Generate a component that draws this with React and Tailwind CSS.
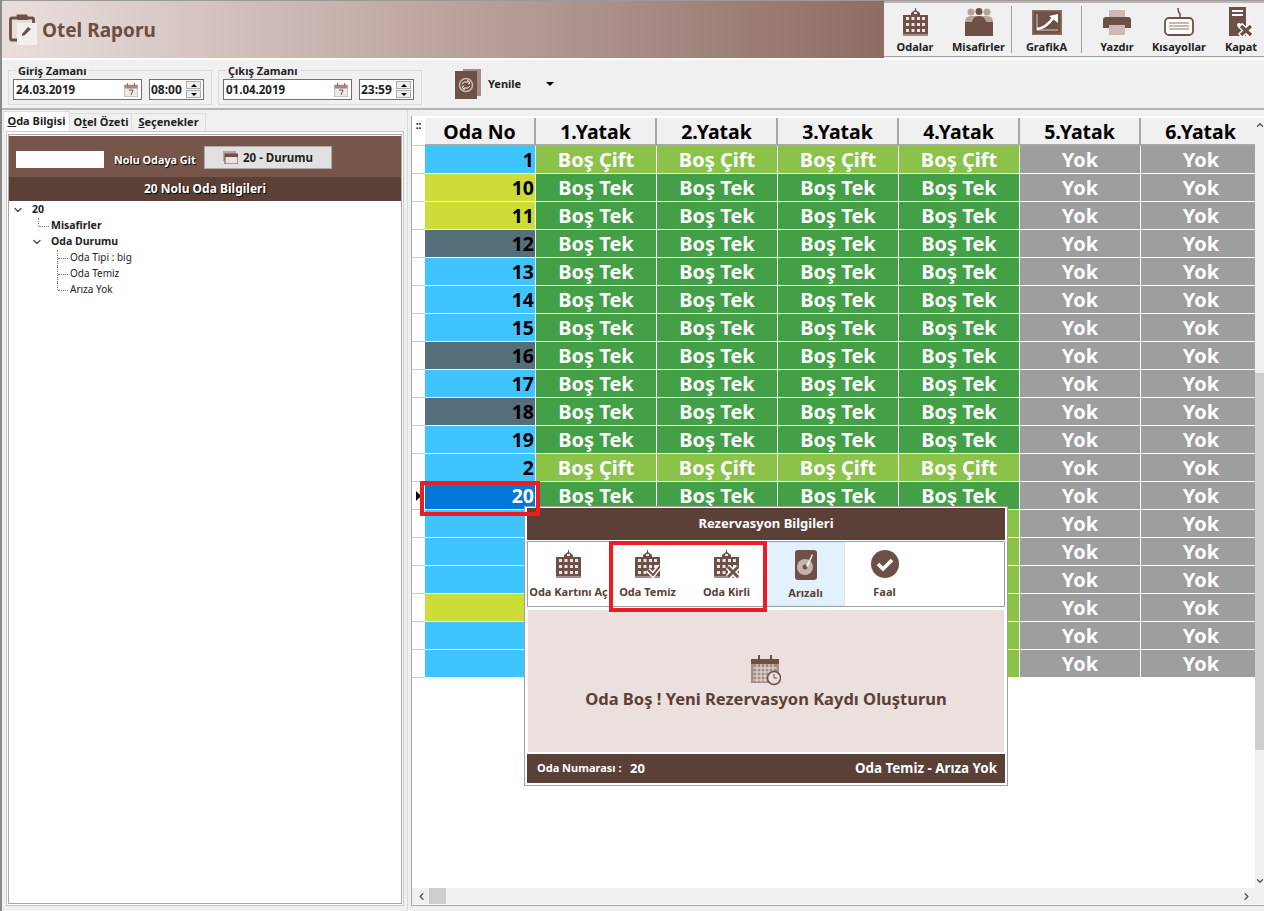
import React from "react";
import { ChevronDown, ChevronUp, ChevronLeft, ChevronRight } from "lucide-react";

const brown = "#6f5046";

// kind: c = boş çift, t = boş tek, h = behind the popup
const rooms = [
  ["1", "bg-[#40c4ff]", "c"],
  ["10", "bg-[#cddc39]", "t"],
  ["11", "bg-[#cddc39]", "t"],
  ["12", "bg-[#546e7a]", "t"],
  ["13", "bg-[#40c4ff]", "t"],
  ["14", "bg-[#40c4ff]", "t"],
  ["15", "bg-[#40c4ff]", "t"],
  ["16", "bg-[#546e7a]", "t"],
  ["17", "bg-[#40c4ff]", "t"],
  ["18", "bg-[#546e7a]", "t"],
  ["19", "bg-[#40c4ff]", "t"],
  ["2", "bg-[#40c4ff]", "c"],
  ["20", "bg-[#0078d7]", "t"],
  ["3", "bg-[#40c4ff]", "h"],
  ["4", "bg-[#40c4ff]", "h"],
  ["5", "bg-[#40c4ff]", "h"],
  ["6", "bg-[#cddc39]", "h"],
  ["7", "bg-[#40c4ff]", "h"],
  ["8", "bg-[#40c4ff]", "h"],
];

function BuildingIcon({ children }) {
  return (
    <svg width="25" height="28" viewBox="0 0 25 28">
      <path d="M12 0l1 0 0 2 4 3 0 2 8 0 0 21-25 0 0-21 8 0 0-2 4-3z" fill={brown} />
      <rect x="0" y="26" width="25" height="2" fill="#a58d85" />
      <g fill="#fff" opacity="0.85">
        <rect x="11" y="4" width="3" height="2" />
        {[9, 15, 21].map((y) => (
          <React.Fragment key={y}>
            <rect x="3" y={y} width="3" height="3" />
            <rect x="8.5" y={y} width="3" height="3" />
            <rect x="14" y={y} width="3" height="3" />
            <rect x="19" y={y} width="3" height="3" />
          </React.Fragment>
        ))}
      </g>
      {children}
    </svg>
  );
}

function PeopleIcon() {
  return (
    <svg width="28" height="28" viewBox="0 0 28 28">
      <circle cx="6" cy="4" r="3.5" fill="#b8a29a" />
      <circle cx="22" cy="4" r="3.5" fill="#b8a29a" />
      <circle cx="14" cy="3.5" r="3.5" fill={brown} />
      <path d="M0 14q0-6 6-6l16 0q6 0 6 6l0 14-28 0z" fill="#b8a29a" />
      <path d="M0 14l7 0q1-6 7-6 6 0 7 6l7 0 0 14-28 0z" fill={brown} />
    </svg>
  );
}

function ChartIcon() {
  return (
    <svg width="30" height="25" viewBox="0 0 30 25">
      <rect x="0" y="0" width="30" height="25" fill="#8d6e63" />
      <rect x="1.5" y="1.5" width="27" height="22" fill={brown} />
      <path d="M5 4l0 16 21 0" stroke="#d9cdc9" strokeWidth="1" fill="none" />
      <path d="M5 19q9-1 16-11" stroke="#fff" strokeWidth="2.5" fill="none" />
      <path d="M17 6l9-2 0 9z" fill="#fff" />
    </svg>
  );
}

function PrinterIcon() {
  return (
    <svg width="28" height="25" viewBox="0 0 28 25">
      <rect x="6" y="0" width="16" height="8" fill="#ccb9b3" />
      <path d="M3 7l22 0q3 0 3 3l0 8-6 0 0-3-16 0 0 3-6 0 0-8q0-3 3-3z" fill={brown} />
      <rect x="6" y="15" width="16" height="10" fill="#ccb9b3" />
    </svg>
  );
}

function KeyboardIcon() {
  return (
    <svg width="30" height="28" viewBox="0 0 30 28">
      <path d="M14 0q0 4 2 6l0 6" stroke={brown} strokeWidth="1.6" fill="none" />
      <rect x="1" y="10" width="28" height="17" rx="4" fill="#fff" stroke={brown} strokeWidth="1.8" />
      <g fill="#c9b8b2">
        {[14, 17, 20].map((y) => (
          <rect key={y} x="5" y={y} width="20" height="2" />
        ))}
      </g>
    </svg>
  );
}

function ServerXIcon() {
  return (
    <svg width="24" height="30" viewBox="0 0 24 30">
      <rect x="0" y="0" width="17" height="29" fill={brown} />
      <rect x="3" y="3" width="11" height="2" fill="#fff" />
      <rect x="3" y="7" width="11" height="2" fill="#fff" />
      <circle cx="10" cy="18" r="2" fill="#fff" />
      <path d="M11 18l12 11M23 18l-12 11" stroke="#fff" strokeWidth="6" />
      <path d="M12 19l10 9M22 19l-10 9" stroke={brown} strokeWidth="3.5" />
    </svg>
  );
}

function ClipboardIcon() {
  return (
    <svg width="29" height="32" viewBox="0 0 29 32">
      <path d="M3 4l6 0 0-2 8 0 0 2 6 0q1.500 0 1.500 1.500l0 19q0 1.500-1.500 1.500l-20 0q-1.500 0-1.500-1.500l0-19q0-1.500 1.500-1.500z" fill="none" stroke={brown} strokeWidth="2.8" />
      <rect x="8" y="2" width="11" height="4" fill={brown} />
      <rect x="8" y="9" width="20" height="22" fill="#f3efed" />
      <path d="M13 20l6-7 3 2-6 6-3 1z" fill={brown} />
    </svg>
  );
}

function CalendarMini() {
  return (
    <svg width="14" height="14" viewBox="0 0 14 14">
      <rect x="0.5" y="2" width="13" height="11.5" fill="#ece8e6" stroke="#c9c2bf" />
      <rect x="0.5" y="2" width="13" height="3.5" fill="#a78a80" />
      <rect x="3" y="0" width="1" height="3" fill="#8d6e63" />
      <rect x="10" y="0" width="1" height="3" fill="#8d6e63" />
      <path d="M5 7l4 0-2 5" stroke="#6f5046" fill="none" />
    </svg>
  );
}

function Spinner() {
  return (
    <div className="w-[15px] h-[17px] flex flex-col gap-px">
      <div className="flex-1 bg-[#ededed] border border-[#adadad] flex items-center justify-center">
        <div className="w-0 h-0 border-x-[3px] border-x-transparent border-b-[3px] border-b-black" />
      </div>
      <div className="flex-1 bg-[#ededed] border border-[#adadad] flex items-center justify-center">
        <div className="w-0 h-0 border-x-[3px] border-x-transparent border-t-[3px] border-t-black" />
      </div>
    </div>
  );
}

function DateGroup({ label, date, time }) {
  return (
    <fieldset className="w-[204px] h-[41px] border border-[#dcdcdc] px-[4px] flex">
      <legend className="ml-[3px] px-[2px] text-[11px] leading-[13px] font-bold text-[#222]">{label}</legend>
      <div className="flex items-start gap-[7px] mt-[2px]">
        <div className="w-[129px] h-[21px] bg-white border border-[#707070] flex items-center justify-between pl-[2px] pr-[3px] text-[11.5px] font-bold text-[#222]">
          {date}
          <CalendarMini />
        </div>
        <div className="w-[55px] h-[21px] bg-white border border-[#707070] flex items-center justify-between pl-[1px] pr-[2px] text-[12px] font-bold text-[#222]">
          {time}
          <Spinner />
        </div>
      </div>
    </fieldset>
  );
}

function ToolButton({ icon, label, className }) {
  return (
    <div className={"shrink-0 flex flex-col items-center h-[48px] " + className}>
      <div className="h-[32px] flex items-center justify-center">{icon}</div>
      <span className="mt-[2px] text-[11px] leading-[13px] font-bold text-[#222] whitespace-nowrap">{label}</span>
    </div>
  );
}

function TreeRow({ indent, open, bold, line, last, children }) {
  return (
    <div className="h-[16px] flex items-center text-[#222] relative" style={{ paddingLeft: indent }}>
      {open && <ChevronDown size={12} strokeWidth={3} className="text-[#555] -ml-[20px] mr-[8px] shrink-0" />}
      {line && (
        <span className={"absolute top-0 border-l border-dotted border-[#777] " + (last ? "h-[8px]" : "h-[16px]")} style={{ left: indent - 13 }} />
      )}
      {line && <span className="w-[10px] mr-[2px] -ml-[12px] border-t border-dotted border-[#777]" />}
      <span className={bold ? "font-bold text-[10.5px]" : "text-[10px] -mt-[2px]"}>{children}</span>
    </div>
  );
}

function Cell({ kind, col }) {
  const base = "text-white text-center border-r border-b border-white leading-[27px] ";
  if (col >= 5) return <div className={base + "bg-[#9e9e9e]"}>Yok</div>;
  if (kind === "h") return <div className={base + "bg-[#8bc34a]"} />;
  return <div className={base + (kind === "c" ? "bg-[#8bc34a]" : "bg-[#43a047]")}>{kind === "c" ? "Boş Çift" : "Boş Tek"}</div>;
}

function PopButton({ icon, label, active }) {
  return (
    <div className={"w-[79px] h-[64px] flex flex-col items-center pt-[7px] " + (active ? "bg-[#e3f1fc] border border-[#d3e8fa]" : "")}>
      <div className="h-[30px] flex items-center">{icon}</div>
      <span className="mt-[6px] text-[11px] leading-[13px] font-bold text-[#5b4037] whitespace-nowrap">{label}</span>
    </div>
  );
}

function Popup() {
  return (
    <div className="absolute left-[524px] top-[506px] w-[484px] h-[280px] bg-white border border-[#a0a0a0] p-[1px] flex flex-col">
      <div className="h-[32px] mx-[1px] bg-[#5b4037] flex items-center justify-center text-white text-[13px] font-bold">Rezervasyon Bilgileri</div>
      <div className="h-[66px] mt-[1px] mx-[1px] border border-[#a0a0a0] flex pl-[1px]">
        <PopButton label="Oda Kartını Aç" icon={<BuildingIcon />} />
        <PopButton label="Oda Temiz" icon={
          <BuildingIcon>
            <path d="M13 20l5 5 7-9" stroke="#fff" strokeWidth="5" fill="none" />
            <path d="M13 20l5 5 7-9" stroke={brown} strokeWidth="2" fill="none" />
          </BuildingIcon>} />
        <PopButton label="Oda Kirli" icon={
          <BuildingIcon>
            <path d="M14 17l10 10M24 17l-10 10" stroke="#fff" strokeWidth="6" />
            <path d="M14 17l10 10M24 17l-10 10" stroke={brown} strokeWidth="3" />
          </BuildingIcon>} />
        <PopButton active label="Arızalı" icon={
          <svg width="22" height="30" viewBox="0 0 22 30">
            <rect x="0" y="0" width="22" height="30" rx="3" fill={brown} />
            <circle cx="10" cy="17" r="8" fill="#c5b3ad" />
            <circle cx="10" cy="17" r="2.5" fill={brown} />
            <path d="M11 16l6-12 1 1-5 12z" fill="#f0ebe9" />
          </svg>} />
        <PopButton label="Faal" icon={
          <svg width="28" height="28" viewBox="0 0 28 28">
            <circle cx="14" cy="14" r="14" fill={brown} />
            <path d="M7 14l5 5 9-9" stroke="#fff" strokeWidth="3.5" fill="none" />
          </svg>} />
      </div>
      <div className="h-[142px] mt-[3px] mx-[2px] bg-[#ece0de] flex flex-col items-center pt-[44px]">
        <svg width="30" height="32" viewBox="0 0 30 32">
          <rect x="0" y="5" width="28" height="24" fill="#a58d85" />
          <rect x="0" y="5" width="28" height="5" fill={brown} />
          <rect x="7" y="1" width="2" height="7" fill={brown} />
          <rect x="19" y="1" width="2" height="7" fill={brown} />
          <path d="M2 14h24M2 18h24M2 22h24M2 26h24M6 10v18M10 10v18M14 10v18M18 10v18M22 10v18" stroke="#ece0de" />
          <circle cx="23" cy="24" r="6.5" fill="#ece0de" stroke={brown} strokeWidth="1.5" />
          <path d="M23 20v4h3" stroke={brown} fill="none" />
        </svg>
        <div className="text-[16.500px] leading-[20px] mt-[3px] font-bold text-[#5b4037]">Oda Boş ! Yeni Rezervasyon Kaydı Oluşturun</div>
      </div>
      <div className="h-[29px] mt-[2px] mx-[1px] bg-[#5b4037] flex items-center text-white font-bold pl-[10px] pr-[8px]">
        <span className="text-[11px] w-[93px]">Oda Numarası :</span>
        <span className="text-[13px]">20</span>
        <span className="ml-auto text-[13.400px]">Oda Temiz - Arıza Yok</span>
      </div>
    </div>
  );
}

export default function App() {
  return (
    <div className="relative w-[1264px] h-[911px] overflow-hidden bg-[#f0f0f0] border-l-2 border-l-[#8a8a8a] font-['Noto_Sans',sans-serif] flex flex-col">
      {/* title bar */}
      <div className="h-[58px] flex border-t border-t-[#9a9a9a] shrink-0">
        <div className="w-[882px] border-r-2 border-r-[#8f6d65] bg-linear-to-r from-[#eadfdd] to-[#8f6d65] flex items-center pl-[7px] gap-[4px]">
          <ClipboardIcon />
          <span className="mt-[1px] text-[19px] font-bold text-[#6b4d43]">Otel Raporu</span>
        </div>
        <div className="flex-1 border-t-2 border-t-[#bfb5b2] border-b border-b-[#a0a0a0] mb-[1px] flex pt-[3px] overflow-hidden">
          <ToolButton className="w-[62px]" label="Odalar" icon={<BuildingIcon />} />
          <ToolButton className="w-[65px]" label="Misafirler" icon={<PeopleIcon />} />
          <div className="w-px h-[47px] bg-[#a0a0a0] shrink-0" />
          <ToolButton className="w-[69px]" label="GrafikA" icon={<ChartIcon />} />
          <div className="w-px h-[47px] bg-[#a0a0a0] shrink-0" />
          <div className="w-[4px] shrink-0" />
          <ToolButton className="w-[62px]" label="Yazdır" icon={<PrinterIcon />} />
          <ToolButton className="w-[62px]" label="Kısayollar" icon={<KeyboardIcon />} />
          <ToolButton className="w-[62px]" label="Kapat" icon={<ServerXIcon />} />
        </div>
      </div>
      <div className="h-[2px] bg-white shrink-0" />

      {/* date bar */}
      <div className="h-[50px] shrink-0 border-b-2 border-b-[#b4b4b4] flex items-start pl-[6px] pt-[4px] gap-[6px]">
        <DateGroup label="Giriş Zamanı" date="24.03.2019" time="08:00" />
        <DateGroup label="Çıkış Zamanı" date="01.04.2019" time="23:59" />
        <div className="ml-[27px] mt-[5px] flex items-center">
          <svg width="26" height="30" viewBox="0 0 26 30">
            <rect x="8" y="0" width="18" height="27" fill="#a58d85" />
            <rect x="0" y="2" width="22" height="28" fill={brown} />
            <circle cx="11" cy="16" r="6.500" fill="none" stroke="#c9b8b2" strokeWidth="1.500" />
            <path d="M7 15q2-3 6-2l0-1.500 2 2.500-2 1M15 17q-2 3-6 2l0 1.500-2-2.500 2-1" stroke="#fff" strokeWidth="1" fill="none" />
          </svg>
          <span className="ml-[7px] w-[58px] text-[11px] font-bold text-[#222]">Yenile</span>
          <div className="w-0 h-0 border-x-[4px] border-x-transparent border-t-[4px] border-t-black" />
        </div>
      </div>

      <div className="flex-1 flex min-h-0">
        {/* left panel */}
        <div className="w-[403px] shrink-0 pl-[1px] pt-[1px] pb-[5px] flex flex-col">
          <div className="flex h-[20px] items-end text-[11px] font-bold text-[#222]">
            <div className="h-[20px] w-[67px] bg-white flex items-start pt-[1px] justify-center border-x border-t border-[#dcdcdc]"><span><u>O</u>da Bilgisi</span></div>
            <div className="h-[18px] w-[61px] ml-px flex items-center justify-center border-r border-t border-[#dcdcdc]"><span>O<u>t</u>el Özeti</span></div>
            <div className="h-[18px] w-[74px] flex items-center justify-center border-r border-t border-[#dcdcdc]"><span><u>S</u>eçenekler</span></div>
          </div>
          <div className="ml-[3px] mr-[1px] flex-1 bg-white border border-[#c8c8c8] p-[1px] pt-[2px]">
            <div className="h-full border border-[#a8a8a8] pt-[1px]">
              <div className="h-[41px] bg-[#77554a] flex items-center pl-[7px] text-white font-bold">
                <div className="w-[88px] h-[17px] bg-white mt-[6px]" />
                <span className="ml-[10px] mt-[7px] w-[90px] text-[10.800px] [text-shadow:1px_1px_1px_#000]">Nolu Odaya Git</span>
                <div className="w-[128px] h-[23px] mt-[2px] bg-[#e1e1e1] border border-[#ababab] flex items-center justify-center gap-[5px] text-[#222] text-[11.500px]">
                  <svg width="15" height="13" viewBox="0 0 15 13">
                    <rect x="0" y="0" width="13" height="10" fill="#b8a29a" />
                    <rect x="2" y="3" width="13" height="10" fill="#e9e2df" stroke={brown} />
                    <rect x="2" y="3" width="13" height="3" fill={brown} />
                  </svg>
                  20 - Durumu
                </div>
              </div>
              <div className="h-[24px] bg-[#5b4037] flex items-center justify-center text-white text-[12px] font-bold [text-shadow:1px_1px_1px_#000]">20 Nolu Oda Bilgileri</div>
              <div className="pt-[1px]">
                <TreeRow indent={23} open bold>20</TreeRow>
                <TreeRow indent={42} bold line last>Misafirler</TreeRow>
                <TreeRow indent={42} open bold>Oda Durumu</TreeRow>
                <TreeRow indent={61} line>Oda Tipi : big</TreeRow>
                <TreeRow indent={61} line>Oda Temiz</TreeRow>
                <TreeRow indent={61} line last>Arıza Yok</TreeRow>
              </div>
            </div>
          </div>
        </div>

        {/* grid panel */}
        <div className="flex-1 min-w-0 border-l border-l-[#dcdcdc] ml-[2px] pb-[5px] pt-[6px] flex flex-col">
          <div className="flex-1 ml-[3px] border-l border-l-[#a8a8a8] border-b border-b-[#a8a8a8] flex flex-col bg-white min-h-0 pt-[2px]">
            <div className="flex-1 flex min-h-0">
              <div className="flex-1 min-w-0 overflow-hidden">
                <div className="grid grid-cols-[13px_111px_121px_121px_121px_121px_121px_121px] grid-rows-[28px] auto-rows-[28px] text-[20px] font-bold w-max">
                  <div className="text-[10px] leading-[14px] text-black text-center border-b border-[#ccc]">::</div>
                  {["Oda No", "1.Yatak", "2.Yatak", "3.Yatak", "4.Yatak", "5.Yatak", "6.Yatak"].map((h) => (
                    <div key={h} className="bg-[#f0f0f0] text-black text-center text-[19.500px] border-r-2 border-r-[#a8a8a8] border-b-2 border-b-[#a8a8a8] leading-[27px]">{h}</div>
                  ))}
                  {rooms.map(([no, color, kind]) => (
                    <React.Fragment key={no}>
                      <div className="border-b border-[#ccc] bg-white" />
                      <div className={color + " " + (no === "20" ? "text-white" : "text-black") + " text-right pr-[1px] text-[19.500px] border-r border-b border-white leading-[27px]"}>{kind === "h" ? "" : no}</div>
                      {[1, 2, 3, 4, 5, 6].map((c) => (
                        <Cell key={c} kind={kind} col={c} />
                      ))}
                    </React.Fragment>
                  ))}
                </div>
              </div>
              <div className="w-[9px] shrink-0 bg-[#f0f0f0] flex flex-col items-center">
                <ChevronUp size={10} strokeWidth={3} className="text-[#555] mt-[2px] shrink-0" />
                <div className="h-[243px] shrink-0" />
                <div className="w-full h-[377px] bg-[#cdcdcd] shrink-0" />
                <ChevronDown size={10} strokeWidth={3} className="text-[#555] mt-auto mb-[2px] shrink-0" />
              </div>
            </div>
            <div className="h-[16px] shrink-0 bg-[#f0f0f0] flex items-center mb-[1px]">
              <ChevronLeft size={11} strokeWidth={3} className="text-[#555] ml-[4px]" />
              <div className="ml-[2px] w-[17px] h-full bg-[#cdcdcd]" />
              <ChevronRight size={11} strokeWidth={3} className="text-[#555] ml-auto mr-[12px]" />
            </div>
          </div>
        </div>
      </div>

      {/* row pointer */}
      <div className="absolute left-[414px] top-[491px] w-0 h-0 border-y-[5px] border-y-transparent border-l-[5px] border-l-black" />
      <div className="absolute left-[-2px] top-0 w-[1264px] h-[911px]">
        <Popup />
        {/* red annotations */}
        <div className="absolute left-[420px] top-[481px] w-[120px] h-[35px] border-[4px] border-[#ed1c24]" />
        <div className="absolute left-[609px] top-[541px] w-[158px] h-[71px] border-[4px] border-[#ed1c24]" />
      </div>
    </div>
  );
}
